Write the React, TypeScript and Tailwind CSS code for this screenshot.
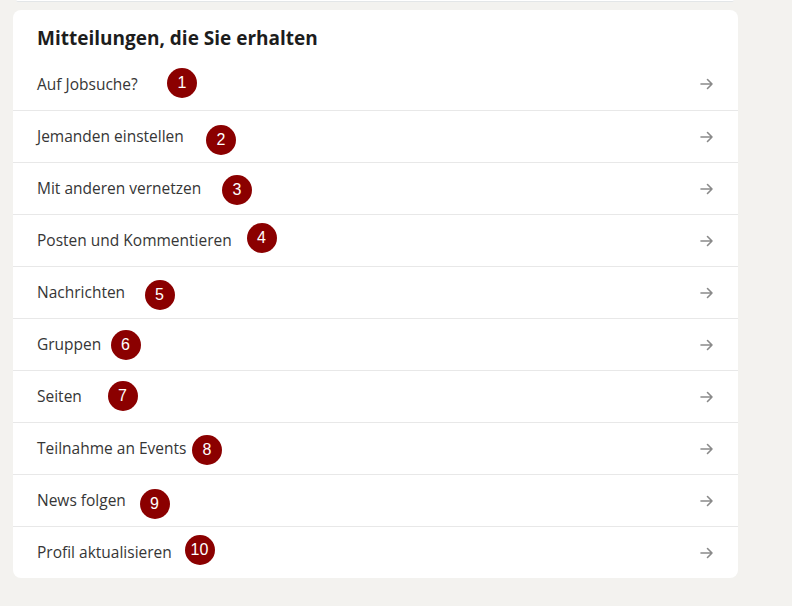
import React from "react";

const rows: { label: string; n: number; cx: number; cy: number }[] = [
  { label: "Auf Jobsuche?", n: 1, cx: 182, cy: 25 },
  { label: "Jemanden einstellen", n: 2, cx: 221, cy: 29.5 },
  { label: "Mit anderen vernetzen", n: 3, cx: 237, cy: 27.5 },
  { label: "Posten und Kommentieren", n: 4, cx: 261.5, cy: 24 },
  { label: "Nachrichten", n: 5, cx: 159.5, cy: 29 },
  { label: "Gruppen", n: 6, cx: 125.5, cy: 27 },
  { label: "Seiten", n: 7, cx: 122.5, cy: 25.5 },
  { label: "Teilnahme an Events", n: 8, cx: 207, cy: 28 },
  { label: "News folgen", n: 9, cx: 154.5, cy: 29.5 },
  { label: "Profil aktualisieren", n: 10, cx: 199.5, cy: 24 },
];

function Arrow() {
  return (
    <svg width="16" height="16" viewBox="0 0 16 16" fill="none" className="shrink-0">
      <path
        d="M2 8h11M8.5 3.5L13 8l-4.5 4.5"
        stroke="#8a8a8a"
        strokeWidth="1.6"
        strokeLinecap="round"
        strokeLinejoin="round"
      />
    </svg>
  );
}

export default function App() {
  return (
    <div
      className="w-[792px] h-[606px] bg-[#f3f2ef] overflow-hidden"
      style={{ fontFamily: '"Open Sans", "Noto Sans", sans-serif' }}
    >
      <div className="ml-[16px] w-[718px] h-[2px] bg-white border-b border-[#e3e6e8] rounded-b" />
      <div className="ml-[13px] mt-[8px] w-[725px] bg-white rounded-lg relative">
        <div className="pl-[24px] pt-[15px] h-[48px]">
          <h2 className="text-[19px] font-bold text-[#1d1d1d] leading-[27px]">
            Mitteilungen, die Sie erhalten
          </h2>
        </div>
        <div className="flex flex-col">
          {rows.map((r, i) => (
            <div
              key={r.n}
              className={
                "relative h-[52px] flex items-center justify-between pl-[24px] pr-[23px] " +
                (i > 0 ? "border-t border-[#e8e8e8]" : "")
              }
            >
              <span className="text-[15.5px] text-[#363636] leading-[20px] -mt-[1px]">{r.label}</span>
              <Arrow />
              <div
                className="absolute w-[30px] h-[30px] rounded-full bg-[#8b0000] flex items-center justify-center text-white text-[16px] leading-none"
                style={{
                  left: r.cx - 15 - 13,
                  top: r.cy - 15 - (i > 0 ? 1 : 0),
                  fontFamily: '"Liberation Sans", Arial, sans-serif',
                }}
              >
                {r.n}
              </div>
            </div>
          ))}
        </div>
      </div>
    </div>
  );
}
